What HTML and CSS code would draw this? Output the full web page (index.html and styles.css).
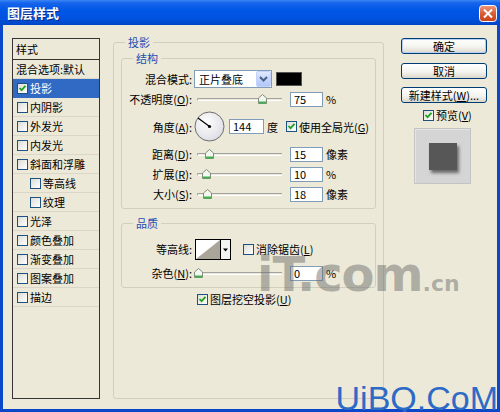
FILE: index.html
```html
<!DOCTYPE html>
<html lang="zh-CN">
<head>
<meta charset="utf-8">
<title>图层样式</title>
<link rel="stylesheet" href="styles.css">
</head>
<body>
<div class="window">
  <div class="titlebar">
    <span class="title">图层样式</span>
    <span class="close"><svg width="18" height="17" viewBox="0 0 18 17"><defs><linearGradient id="cg" x1="0" y1="0" x2="0" y2="1"><stop offset="0" stop-color="#EE9A7C"/><stop offset="0.5" stop-color="#DB5B33"/><stop offset="1" stop-color="#C7421C"/></linearGradient></defs><rect x="0.5" y="0.5" width="17" height="16" rx="3" fill="url(#cg)" stroke="#FFFFFF"/><path d="M5 4.5 L13 12.5 M13 4.5 L5 12.5" stroke="#FFFFFF" stroke-width="2"/></svg></span>
  </div>
  <div class="client">
    <div class="stylelist">
      <div class="lhead">样式</div>
      <div class="litem">混合选项:默认</div>
      <div class="litem sel"><span class="cb on"><svg viewBox="0 0 9 9" width="9" height="9"><path d="M1.5 4 L3.6 6.2 L7.5 1.8" fill="none" stroke="#21A121" stroke-width="1.8"/></svg></span>投影</div>
      <div class="litem"><span class="cb"></span>内阴影</div>
      <div class="litem"><span class="cb"></span>外发光</div>
      <div class="litem"><span class="cb"></span>内发光</div>
      <div class="litem"><span class="cb"></span>斜面和浮雕</div>
      <div class="litem sub"><span class="cb"></span>等高线</div>
      <div class="litem sub"><span class="cb"></span>纹理</div>
      <div class="litem"><span class="cb"></span>光泽</div>
      <div class="litem"><span class="cb"></span>颜色叠加</div>
      <div class="litem"><span class="cb"></span>渐变叠加</div>
      <div class="litem"><span class="cb"></span>图案叠加</div>
      <div class="litem"><span class="cb"></span>描边</div>
    </div>

    <fieldset class="group outer">
      <legend>投影</legend>
      <fieldset class="group inner struct">
        <legend>结构</legend>
        <div class="row">
          <span class="lbl">混合模式:</span>
          <div class="select"><span class="sel-text">正片叠底</span><span class="sel-btn"><svg width="13" height="14" viewBox="0 0 13 14"><path d="M3 5 L6.5 8.5 L10 5" fill="none" stroke="#4D6185" stroke-width="2"/></svg></span></div>
          <span class="swatch"></span>
        </div>
        <div class="row">
          <span class="lbl">不透明度(<u>O</u>):</span>
          <div class="slider"><span class="track"></span><span class="thumb" style="left:64px"><svg width="9" height="10" viewBox="0 0 9 10"><path d="M0.5 4 L4.5 0.5 L8.5 4 L8.5 9.5 L0.5 9.5 Z" fill="#F4F6F0" stroke="#7E8C7E"/><path d="M1 8.5 H8" stroke="#3DB24A" stroke-width="2"/></svg></span></div>
          <span class="num">75</span><span class="unit">%</span>
        </div>
        <div class="row tall">
          <span class="lbl">角度(<u>A</u>):</span>
          <svg class="dial" width="31" height="31" viewBox="0 0 31 31"><defs><radialGradient id="dg" cx="40%" cy="35%" r="70%"><stop offset="0" stop-color="#FFFFFF"/><stop offset="1" stop-color="#DCDCE4"/></radialGradient></defs><circle cx="15.5" cy="15.5" r="14.5" fill="url(#dg)" stroke="#6E6E6E"/><line x1="15.5" y1="15.5" x2="4" y2="7" stroke="#000" stroke-width="1.2"/><circle cx="15.5" cy="15.5" r="1.6" fill="#000"/></svg>
          <span class="num wide">144</span><span class="unit">度</span>
          <span class="cb on gap8"><svg viewBox="0 0 9 9" width="9" height="9"><path d="M1.5 4 L3.6 6.2 L7.5 1.8" fill="none" stroke="#21A121" stroke-width="1.8"/></svg></span><span class="cbl">使用全局光(<u>G</u>)</span>
        </div>
        <div class="row">
          <span class="lbl">距离(<u>D</u>):</span>
          <div class="slider"><span class="track"></span><span class="thumb" style="left:11px"><svg width="9" height="10" viewBox="0 0 9 10"><path d="M0.5 4 L4.5 0.5 L8.5 4 L8.5 9.5 L0.5 9.5 Z" fill="#F4F6F0" stroke="#7E8C7E"/><path d="M1 8.5 H8" stroke="#3DB24A" stroke-width="2"/></svg></span></div>
          <span class="num">15</span><span class="unit">像素</span>
        </div>
        <div class="row">
          <span class="lbl">扩展(<u>R</u>):</span>
          <div class="slider"><span class="track"></span><span class="thumb" style="left:8px"><svg width="9" height="10" viewBox="0 0 9 10"><path d="M0.5 4 L4.5 0.5 L8.5 4 L8.5 9.5 L0.5 9.5 Z" fill="#F4F6F0" stroke="#7E8C7E"/><path d="M1 8.5 H8" stroke="#3DB24A" stroke-width="2"/></svg></span></div>
          <span class="num">10</span><span class="unit">%</span>
        </div>
        <div class="row">
          <span class="lbl">大小(<u>S</u>):</span>
          <div class="slider"><span class="track"></span><span class="thumb" style="left:9px"><svg width="9" height="10" viewBox="0 0 9 10"><path d="M0.5 4 L4.5 0.5 L8.5 4 L8.5 9.5 L0.5 9.5 Z" fill="#F4F6F0" stroke="#7E8C7E"/><path d="M1 8.5 H8" stroke="#3DB24A" stroke-width="2"/></svg></span></div>
          <span class="num">18</span><span class="unit">像素</span>
        </div>
      </fieldset>

      <fieldset class="group inner quality">
        <legend>品质</legend>
        <div class="row qrow">
          <span class="lbl">等高线:</span>
          <div class="contour"><span class="contour-img"><svg width="24" height="19" viewBox="0 0 24 19"><polygon points="0,19 24,0 24,19" fill="#A9A599"/></svg></span><span class="contour-btn"><svg width="9" height="19" viewBox="0 0 9 19"><path d="M2 8.5 H7 L4.5 11.5 Z" fill="#000"/></svg></span></div>
          <span class="cb gap12"></span><span class="cbl">消除锯齿(<u>L</u>)</span>
        </div>
        <div class="row qrow">
          <span class="lbl">杂色(<u>N</u>):</span>
          <div class="slider"><span class="track"></span><span class="thumb" style="left:0px"><svg width="9" height="10" viewBox="0 0 9 10"><path d="M0.5 4 L4.5 0.5 L8.5 4 L8.5 9.5 L0.5 9.5 Z" fill="#F4F6F0" stroke="#7E8C7E"/><path d="M1 8.5 H8" stroke="#3DB24A" stroke-width="2"/></svg></span></div>
          <span class="num">0</span><span class="unit">%</span>
        </div>
      </fieldset>

      <div class="row knock">
        <span class="cb on"><svg viewBox="0 0 9 9" width="9" height="9"><path d="M1.5 4 L3.6 6.2 L7.5 1.8" fill="none" stroke="#21A121" stroke-width="1.8"/></svg></span><span class="cbl">图层挖空投影(<u>U</u>)</span>
      </div>
    </fieldset>

    <div class="side">
      <div class="btn default">确定</div>
      <div class="btn b2">取消</div>
      <div class="btn b3">新建样式(<u>W</u>)...</div>
      <div class="preview-row"><span class="cb on"><svg viewBox="0 0 9 9" width="9" height="9"><path d="M1.5 4 L3.6 6.2 L7.5 1.8" fill="none" stroke="#21A121" stroke-width="1.8"/></svg></span><span class="cbl">预览(<u>V</u>)</span></div>
      <div class="preview"><span class="pv-square"></span></div>
    </div>
  </div>
  <div class="wm-it">iT.com<span class="wm-small">.cn</span></div>
  <div class="wm-uibq">UiBQ.CoM</div>
</div>
</body>
</html>
```

FILE: styles.css
```css
* { box-sizing: border-box; }
html, body { margin: 0; padding: 0; }
body {
  width: 500px;
  height: 412px;
  overflow: hidden;
  font-family: "Noto Sans CJK SC", "Liberation Sans", sans-serif;
  font-size: 11px;
  color: #000;
  background: #0A48C9;
}
u { text-decoration: underline; text-underline-offset: 1px; }

.window {
  position: relative;
  width: 500px;
  height: 412px;
  background: #0A48C9;
  display: flex;
  flex-direction: column;
}

.titlebar {
  height: 25px;
  flex: none;
  display: flex;
  align-items: center;
  justify-content: space-between;
  padding: 0 3px 0 7px;
  background: linear-gradient(180deg, #3A86F4 0px, #1664EC 3px, #0057E6 10px, #0052DE 19px, #0046C6 25px);
}
.title {
  color: #fff;
  font-weight: bold;
  font-size: 13px;
  line-height: 25px;
  text-shadow: 1px 1px 0 #0B2A86;
}
.close { display: flex; margin-top: 1px; }

.client {
  flex: none;
  height: 384px;
  margin: 0 3px;
  background: #ECE9D8;
  display: flex;
  align-items: flex-start;
  padding-left: 9px;
}

/* style list */
.stylelist {
  margin-top: 13px;
  width: 88px;
  height: 361px;
  border: 1px solid #353535;
  flex: none;
}
.lhead {
  height: 21px;
  line-height: 20px;
  padding-left: 3px;
  border-bottom: 1px solid #333;
}
.litem {
  height: 19px;
  display: flex;
  align-items: center;
  padding-left: 4px;
  border-bottom: 1px solid #DAD6C8;
  white-space: nowrap;
}
.lhead + .litem { padding-left: 3px; }
.litem.sel { background: #316AC5; color: #fff; border-bottom-color: #316AC5; }
.litem.sub { padding-left: 17px; }
.litem .cb { margin-right: 2px; }

/* checkbox */
.cb {
  display: inline-flex;
  align-items: center;
  justify-content: center;
  width: 11px;
  height: 11px;
  flex: none;
  border: 1px solid #1C5180;
  background: linear-gradient(135deg, #DCDCD7 0%, #F3F3F0 65%, #FFFFFF 100%);
}
.cb svg { display: block; }
.cbl { margin-left: 2px; white-space: nowrap; }
.gap8 { margin-left: 8px; }
.gap12 { margin-left: 12px; }

/* group boxes */
.group {
  margin: 0;
  border: 1px solid #D0D0BF;
  border-radius: 3px;
  min-width: 0;
}
.group > legend {
  color: #1E4DB3;
  line-height: 14px;
  padding: 0 3px;
}
.outer {
  margin: 10px 0 0 13px;
  width: 271px;
  height: 364px;
  padding: 2px 7px 0 7px;
  flex: none;
}
.outer > legend { margin-left: 4px; }
.inner {
  width: 255px;
  padding: 4px 0 4px 0;
}
.inner > legend { margin-left: 11px; }
.quality { margin-top: 7px; padding: 7px 0 2px 0; }

.row {
  display: flex;
  align-items: center;
  height: 20px;
  white-space: nowrap;
}
.row.tall { height: 35px; }
.row.qrow { height: 24px; }
.lbl {
  width: 70px;
  flex: none;
  text-align: right;
  margin-right: 2px;
}

.select {
  width: 78px;
  height: 18px;
  border: 1px solid #7F9DB9;
  background: #fff;
  display: flex;
}
.sel-text { flex: 1; padding-left: 4px; line-height: 16px; }
.sel-btn {
  width: 15px;
  height: 16px;
  display: flex;
  align-items: center;
  justify-content: center;
  border: 1px solid #C3D3FD;
  background: linear-gradient(180deg, #E0E9FE 0%, #C5D6FC 50%, #B0C6F6 100%);
  border-radius: 2px;
}
.swatch {
  margin-left: 4px;
  width: 26px;
  height: 14px;
  background: #000;
  border: 1px solid #555;
}

.slider {
  position: relative;
  width: 92px;
  height: 16px;
  flex: none;
}
.track {
  position: absolute;
  left: 3px;
  right: 4px;
  top: 7px;
  height: 3px;
  border-top: 1px solid #A2A2A0;
  border-bottom: 1px solid #FFFFFF;
  border-left: 1px solid #A2A2A0;
  border-radius: 2px 0 0 2px;
}
.thumb {
  position: absolute;
  top: 3px;
  width: 9px;
  height: 10px;
  display: flex;
}

.num {
  margin-left: 4px;
  width: 33px;
  height: 15px;
  border: 1px solid #7F9DB9;
  background: #fff;
  padding-left: 3px;
  line-height: 13px;
  flex: none;
}
.num.wide { width: 35px; }
.unit { margin-left: 3px; }

.dial { display: block; flex: none; }

.contour {
  margin-left: 1px;
  width: 36px;
  height: 21px;
  border: 1px solid #000;
  background: #fff;
  display: flex;
  flex: none;
}
.contour-img { width: 24px; display: flex; }
.contour-btn {
  width: 10px;
  border-left: 1px solid #000;
  background: #F4F4F2;
  display: flex;
}

.knock { margin-top: 1px; padding-left: 76px; }

/* right side */
.side {
  margin-left: 17px;
  width: 86px;
  padding-top: 13px;
  display: flex;
  flex-direction: column;
  flex: none;
}
.btn {
  height: 16px;
  border: 1px solid #003C74;
  border-radius: 3px;
  background: linear-gradient(180deg, #FFFFFF 0%, #F4F4EF 55%, #DCD7CB 100%);
  text-align: center;
  line-height: 14px;
  white-space: nowrap;
}
.btn.default { box-shadow: inset 0 0 0 1px #B8D0F5; }
.b2 { margin-top: 9px; }
.b3 { margin-top: 8px; }
.preview-row {
  margin-top: 5px;
  height: 14px;
  display: flex;
  align-items: center;
  padding-left: 22px;
}
.preview {
  margin: 6px 0 0 13px;
  width: 57px;
  height: 56px;
  background: #D5D5D5;
  border: 1px solid #C4C4C4;
  box-shadow: inset 1px 1px 0 #E4E4E4;
  padding: 14px 0 0 14px;
}
.pv-square {
  display: block;
  width: 28px;
  height: 27px;
  background: #575757;
  box-shadow: 2px 3px 3px rgba(0, 0, 0, 0.5);
}

/* watermarks (overlay) */
.wm-it {
  position: absolute;
  left: 257px;
  top: 250px;
  font-family: "DejaVu Sans", sans-serif;
  font-weight: bold;
  font-size: 48px;
  line-height: 48px;
  letter-spacing: -1px;
  color: rgba(105, 105, 105, 0.48);
  white-space: nowrap;
}
.wm-small { font-size: 22px; letter-spacing: 0; }
.wm-uibq {
  position: absolute;
  right: 2px;
  top: 381px;
  font-family: "Liberation Sans", sans-serif;
  font-size: 34px;
  line-height: 34px;
  color: #2D6BC5;
  white-space: nowrap;
}
```
